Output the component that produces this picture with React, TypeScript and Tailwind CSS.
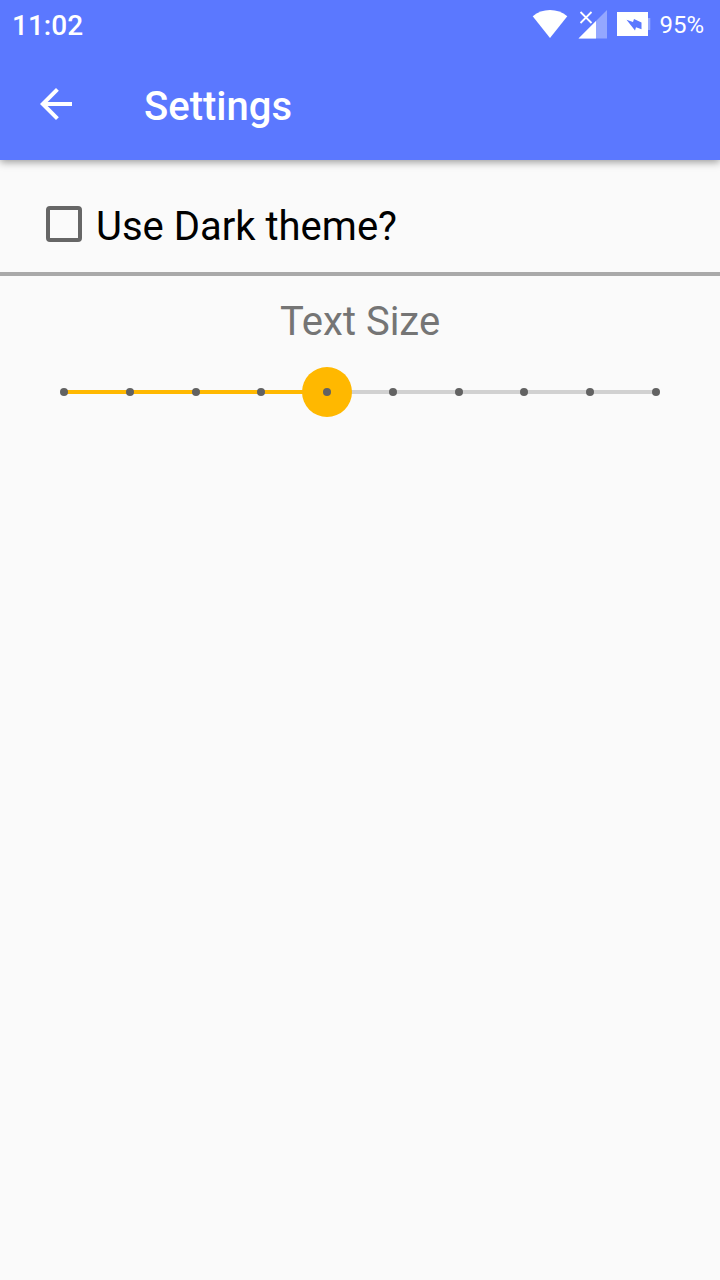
import { useState } from "react";

const STEPS = 10;

function WifiIcon() {
  return (
    <svg width="36" height="28" viewBox="0 0 36 28" fill="#fff" aria-hidden="true">
      <path d="M18 28 .7 6.2C5.500 2.200 11.500 0 18 0s12.500 2.200 17.300 6.200Z" />
    </svg>
  );
}

function SignalIcon() {
  return (
    <svg width="29" height="30" viewBox="0 0 29 30" aria-hidden="true">
      <path d="M29 1v28.500H.5Z" fill="#fff" fillOpacity=".35" />
      <path d="M18 12v17.500H.5Z" fill="#fff" />
      <path d="m2.500 3 11 11m0-11-11 11" stroke="#fff" strokeWidth="1.800" fill="none" />
    </svg>
  );
}

function BatteryIcon() {
  return (
    <svg width="34" height="24" viewBox="0 0 34 24" aria-hidden="true">
      <path d="M31 6h2.300v12H31Z" fill="#fff" fillOpacity=".35" />
      <path d="M0 0h31v24H0Z" fill="#fff" />
      <path d="M9.500 7.800 16 10l1-3 7.500 3.500v6.800L19 15.200l-1 3.300Z" fill="#5b78ff" />
    </svg>
  );
}

function StatusBar() {
  return (
    <div className="flex h-12 items-center justify-between pr-4 pl-3">
      <span className="pt-1 text-[28px] leading-8 font-medium">11:02</span>
      <div className="flex items-center gap-2">
        <div className="flex items-center gap-2.5">
          <WifiIcon />
          <SignalIcon />
          <BatteryIcon />
        </div>
        <span className="pt-0.5 text-2xl">95%</span>
      </div>
    </div>
  );
}

function AppBar() {
  return (
    <div className="flex h-28 items-center gap-16 px-8">
      <button type="button" aria-label="Back" className="size-12">
        <svg className="size-12" viewBox="0 0 24 24" fill="#fff" aria-hidden="true">
          <path d="M20 11H7.830l5.590-5.590L12 4l-8 8 8 8 1.410-1.410L7.830 13H20v-2z" />
        </svg>
      </button>
      <h1 className="pt-1.5 text-[40px] leading-12 font-medium">Settings</h1>
    </div>
  );
}

function TextSizeSlider() {
  const [size, setSize] = useState(4);
  return (
    <section className="flex flex-col pt-5.5">
      <label htmlFor="text-size" className="text-center text-[40px] leading-12 text-[#757575]">
        Text Size
      </label>
      <div className="grid items-center *:[grid-area:1/1]">
        <div className="mx-16 h-1 bg-[#d1d1d1]">
          <div className="h-1 bg-[#ffb800]" style={{ width: `${(size / (STEPS - 1)) * 100}%` }} />
        </div>
        <input
          id="text-size"
          type="range"
          min={0}
          max={STEPS - 1}
          value={size}
          onChange={(e) => setSize(Number(e.target.value))}
          className="z-10 mx-[39px] h-23 appearance-none bg-transparent outline-none [&::-webkit-slider-thumb]:size-[50px] [&::-webkit-slider-thumb]:appearance-none [&::-webkit-slider-thumb]:rounded-full [&::-webkit-slider-thumb]:bg-[#ffb800]"
        />
        <div className="pointer-events-none z-20 mx-[60px] flex justify-between">
          {Array.from({ length: STEPS }, (_, i) => (
            <span key={i} className="size-2 rounded-full bg-[#626262]" />
          ))}
        </div>
      </div>
    </section>
  );
}

export default function App() {
  const [dark, setDark] = useState(false);
  return (
    <div className="min-h-screen bg-[#fafafa] font-[Roboto,sans-serif]">
      <header className="bg-[#5b78ff] text-white shadow-[0_2px_8px_rgba(0,0,0,0.4)]">
        <StatusBar />
        <AppBar />
      </header>
      <main>
        <div className="border-b-4 border-[#a9a9a9] pt-4">
          <label className="flex h-24 items-center gap-3.5 px-[46px] text-[40px] leading-12 text-black">
            <input
              type="checkbox"
              checked={dark}
              onChange={(e) => setDark(e.target.checked)}
              className="size-9 appearance-none rounded-sm border-4 border-[#666] checked:border-[#ffb800] checked:bg-[#ffb800]"
            />
            <span className="pt-1.5">Use Dark theme?</span>
          </label>
        </div>
        <TextSizeSlider />
      </main>
    </div>
  );
}
